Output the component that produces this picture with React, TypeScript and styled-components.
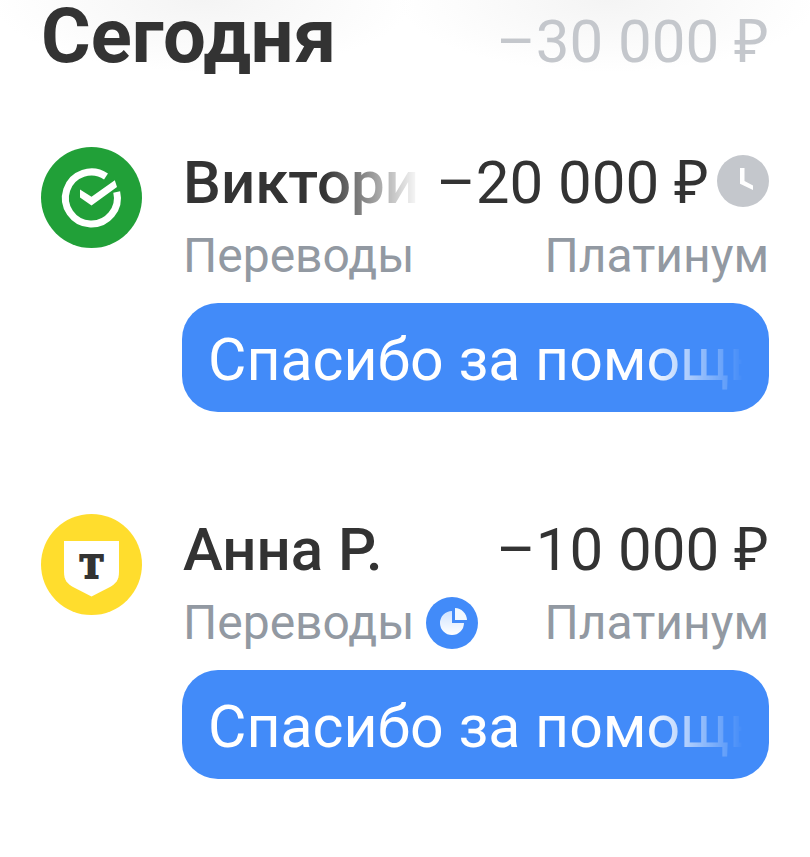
import React from "react";
import styled, { createGlobalStyle } from "styled-components";

const GlobalStyle = createGlobalStyle`
  *, *::before, *::after { box-sizing: border-box; }
  body {
    margin: 0;
    background: #ffffff;
    color: #333333;
    font-family: Roboto, "Noto Sans", sans-serif;
  }
  h1, h2, p, ul { margin: 0; padding: 0; }
`;

const Page = styled.main`
  min-height: 100vh;
  padding: 0 41px 76px;
  background:
    radial-gradient(ellipse 210px 72px at 25% 0, #f4f4f4, #ffffff00) no-repeat,
    radial-gradient(ellipse 210px 72px at 75% 0, #f4f4f4, #ffffff00) no-repeat,
    #ffffff;
`;

const DayHeader = styled.header`
  display: flex;
  align-items: baseline;
  justify-content: space-between;
  height: 147px;
  white-space: nowrap;
`;

const DayTitle = styled.h1`
  font-size: 76px;
  line-height: 72px;
  font-weight: 700;
`;

const AmountText = styled.span<{ $muted?: boolean }>`
  flex: none;
  font-size: 60px;
  line-height: 72px;
  font-weight: 400;
  color: ${(p) => (p.$muted ? "#c4c7cc" : "#333333")};
`;

const Currency = styled.span`
  font-family: "Noto Sans", sans-serif;
  line-height: 0;
`;

const Operations = styled.ul`
  display: flex;
  flex-direction: column;
  gap: 102px;
  list-style: none;
`;

const Operation = styled.li`
  display: grid;
  grid-template-columns: 101px minmax(0, 1fr);
  column-gap: 40px;
`;

const Avatar = styled.svg`
  display: block;
  width: 101px;
  height: 101px;
`;

const Line = styled.div`
  display: flex;
  align-items: center;
  justify-content: space-between;
  height: 72px;
  padding-left: 1px;
  white-space: nowrap;
`;

const Name = styled.h2<{ $faded?: boolean }>`
  flex: 1;
  min-width: 0;
  margin-right: 16px;
  overflow: hidden;
  font-size: 60px;
  line-height: 72px;
  font-weight: 500;
  mask-image: ${(p) =>
    p.$faded ? "linear-gradient(to left, transparent, #000 96px)" : "none"};
`;

const Badge = styled.svg`
  flex: none;
  width: 52px;
  height: 52px;
  margin-left: 12px;
`;

const PendingBadge = styled(Badge)`
  margin: 0 0 4px 8px;
`;

const Details = styled(Line)`
  padding-top: 1px;
  color: #9299a2;
  font-size: 48px;
`;

const Category = styled.span`
  display: flex;
  align-items: center;
`;

const Message = styled.p`
  margin-top: 12px;
  padding: 21px 26px 16px;
  border-radius: 36px;
  background: #428bf9;
  color: #ffffff;
  font-size: 59px;
  line-height: 72px;
`;

const MessageText = styled.span`
  display: block;
  overflow: hidden;
  white-space: nowrap;
  mask-image: linear-gradient(to left, transparent, #000 96px);
`;

const SberLogo = () => (
  <Avatar viewBox="0 0 101 101" aria-label="Сбер" role="img">
    <circle cx="50.5" cy="50.5" r="50.5" fill="#21a038" />
    <path
      d="M65 29.5A26 26 0 1 0 75.7 45"
      fill="none"
      stroke="#fff"
      strokeWidth="7"
    />
    <path d="M39 42.5 50.5 49.8 73.8 33.2 76 40 50.5 58.5 39 50.5Z" fill="#fff" />
  </Avatar>
);

const TBankLogo = () => (
  <Avatar viewBox="0 0 101 101" aria-label="Т-Банк" role="img">
    <circle cx="50.5" cy="50.5" r="50.5" fill="#ffdd2d" />
    <path d="M23 27H78V58C78 66 75 69.5 69 73L50.5 82.5 32 73C26 69.5 23 66 23 58Z" fill="#fff" />
    <text
      x="50.5"
      y="64"
      textAnchor="middle"
      fontFamily="DejaVu Serif, serif"
      fontWeight="700"
      fontSize="31"
      fill="#333"
      stroke="#333"
      strokeWidth="2"
    >
      T
    </text>
  </Avatar>
);

const ClockBadge = () => (
  <PendingBadge viewBox="0 0 52 52" aria-label="В обработке" role="img">
    <circle cx="26" cy="26" r="26" fill="#c4c7cc" />
    <path d="M23 13H27.5V26L36 30.5V35L23 28.7Z" fill="#fff" />
  </PendingBadge>
);

const PieBadge = () => (
  <Badge viewBox="0 0 52 52" aria-label="Категория" role="img">
    <defs>
      <linearGradient id="pie" x1="0" y1="0" x2="0" y2="1">
        <stop offset="0" stopColor="#cfe3ff" />
        <stop offset="1" stopColor="#ffffff" />
      </linearGradient>
    </defs>
    <circle cx="26" cy="26" r="26" fill="#428bf9" />
    <path d="M26 14V26H38A12 12 0 1 1 26 14Z" fill="url(#pie)" />
    <path d="M29 11A12.5 12.5 0 0 1 41 23H29Z" fill="#f2f9ff" />
  </Badge>
);

const Amount = ({ value, muted }: { value: string; muted?: boolean }) => (
  <AmountText $muted={muted}>
    {value} <Currency>₽</Currency>
  </AmountText>
);

type OperationData = {
  logo: React.ReactNode;
  name: string;
  amount: string;
  pending?: boolean;
  cashback?: boolean;
};

const operations: OperationData[] = [
  { logo: <SberLogo />, name: "Виктория", amount: "–20 000", pending: true },
  { logo: <TBankLogo />, name: "Анна Р.", amount: "–10 000", cashback: true },
];

export default function App() {
  return (
    <Page>
      <GlobalStyle />
      <DayHeader>
        <DayTitle>Сегодня</DayTitle>
        <Amount muted value="–30 000" />
      </DayHeader>
      <Operations>
        {operations.map((op) => (
          <Operation key={op.name}>
            {op.logo}
            <div>
              <Line>
                <Name $faded={op.pending}>{op.name}</Name>
                <Amount value={op.amount} />
                {op.pending && <ClockBadge />}
              </Line>
              <Details>
                <Category>
                  Переводы
                  {op.cashback && <PieBadge />}
                </Category>
                <span>Платинум</span>
              </Details>
              <Message>
                <MessageText>Спасибо за помощь</MessageText>
              </Message>
            </div>
          </Operation>
        ))}
      </Operations>
    </Page>
  );
}
